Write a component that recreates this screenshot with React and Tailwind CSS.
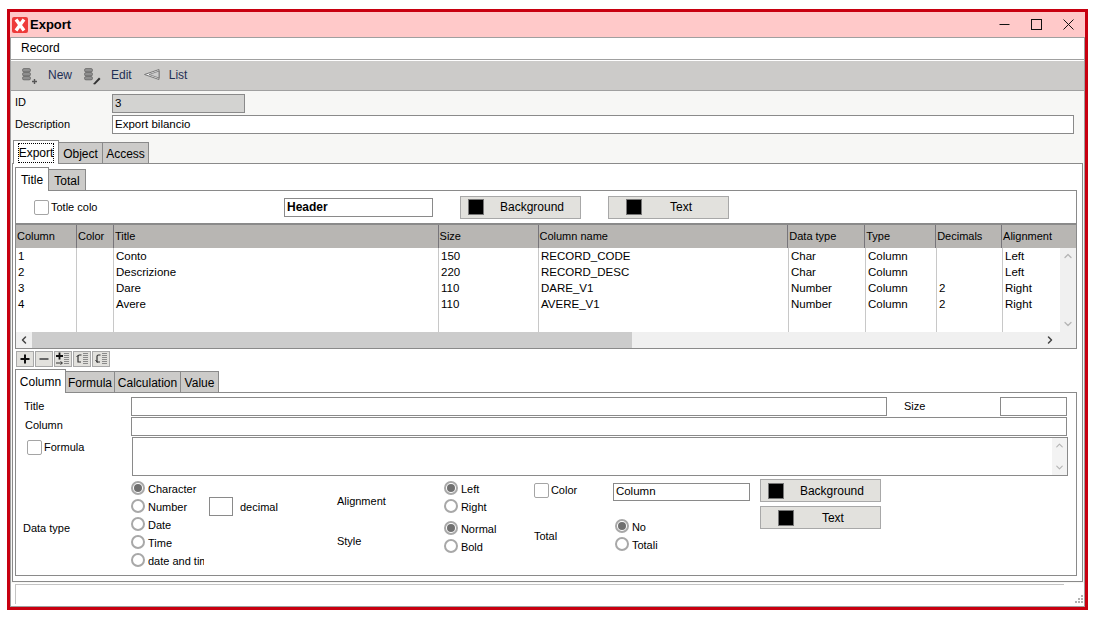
import { ChevronLeft, ChevronRight, ChevronUp, ChevronDown } from "lucide-react";

const columns = [
  { name: "Column", w: "w-[60px]" },
  { name: "Color", w: "w-[37px]" },
  { name: "Title", w: "w-[325px]" },
  { name: "Size", w: "w-[100px]" },
  { name: "Column name", w: "w-[250px]" },
  { name: "Data type", w: "w-[77px]" },
  { name: "Type", w: "w-[71px]" },
  { name: "Decimals", w: "w-[66px]" },
  { name: "Alignment", w: "w-[75px]" },
];

const rows = [
  ["1", "", "Conto", "150", "RECORD_CODE", "Char", "Column", "", "Left"],
  ["2", "", "Descrizione", "220", "RECORD_DESC", "Char", "Column", "", "Left"],
  ["3", "", "Dare", "110", "DARE_V1", "Number", "Column", "2", "Right"],
  ["4", "", "Avere", "110", "AVERE_V1", "Number", "Column", "2", "Right"],
];

function Tab({ label, w, active, focus }) {
  if (active) {
    return (
      <div className={`relative z-10 -mb-px flex h-[24px] ${w} items-center justify-center border border-b-0 border-[#8a8a8a] bg-white pt-px text-[12px]`}>
        <span className={focus ? "outline-1 outline-dotted outline-black" : ""}>{label}</span>
      </div>
    );
  }
  return (
    <div className={`mt-[2px] flex h-[21px] ${w} items-center justify-center border border-b-0 border-l-0 border-[#8a8a8a] bg-[#cccbc9] pt-[2px] text-[12px]`}>
      {label}
    </div>
  );
}

function Check({ label }) {
  return (
    <div className="flex items-center gap-[2px]">
      <span className="h-[15px] w-[15px] shrink-0 rounded-[2px] border border-[#a5a5a5] bg-white" />
      <span className="text-[11px]">{label}</span>
    </div>
  );
}

function Radio({ label, on }) {
  return (
    <div className="flex h-[18px] items-center gap-[3px]">
      <span className="flex h-[14px] w-[14px] shrink-0 items-center justify-center rounded-full border-2 border-[#a8a8a8] bg-white">
        {on && <span className="h-[8px] w-[8px] rounded-full bg-[#707070]" />}
      </span>
      <span className="whitespace-nowrap pt-[2px] text-[11px]">{label}</span>
    </div>
  );
}

function ColorButton({ label, swatchGap, labelPad }) {
  return (
    <div className="flex h-[23px] w-[121px] items-center border border-[#a8a8a8] bg-[#e2e1dd] text-[12px]">
      <span className={`${swatchGap} h-[16px] w-[16px] border border-[#777] bg-black`} />
      <span className={`flex-1 text-center ${labelPad}`}>{label}</span>
    </div>
  );
}

function DbIcon({ children }) {
  return (
    <svg width="20" height="18" viewBox="0 0 20 18">
      <g fill="#8f8f8f" stroke="#555" strokeWidth="0.6">
        <rect x="2.5" y="1.5" width="8" height="3.4" rx="1.5" />
        <rect x="2.5" y="5.5" width="8" height="3.4" rx="1.5" />
        <rect x="2.5" y="9.5" width="8" height="3.4" rx="1.5" />
      </g>
      {children}
    </svg>
  );
}

function MiniBtn({ children }) {
  return (
    <div className="flex h-[16px] w-[18px] items-center justify-center border border-[#a8a8a8] bg-[#e2e1dd]">
      <svg width="16" height="14" viewBox="0 0 16 14">{children}</svg>
    </div>
  );
}

const lines = (
  <path d="M9 1.5h5M9 3.5h5M9 5.5h5M9 7.5h5M9 9.5h5M9 11.5h5" stroke="#8a8a8a" strokeWidth="1" fill="none" />
);

export default function App() {
  return (
    <div
      className="h-[621px] w-[1099px] overflow-hidden bg-white pl-[7px] pt-[9px] text-black"
      style={{ fontFamily: '"Liberation Sans", Arial, sans-serif' }}
    >
      <div className="flex h-[601px] w-[1081px] flex-col border-[3px] border-[#c80010] bg-[#ffc9c9]">
        {/* title bar */}
        <div className="flex h-[25px] shrink-0 items-center pl-[2px]">
          <div className="flex h-[16px] w-[16px] items-center justify-center rounded-[2px] bg-[#ee3a3a]">
            <svg width="14" height="14" viewBox="0 0 14 14">
              <path d="M3 1.5 11 12.5M11 1.5 3 12.5" stroke="white" strokeWidth="3.4" />
            </svg>
          </div>
          <span className="ml-[2px] text-[13px] font-bold">Export</span>
          <div className="ml-auto flex items-center">
            <svg width="11" height="11" viewBox="0 0 11 11" className="mr-[21px]">
              <path d="M0.5 5.5h10" stroke="#111" strokeWidth="1" />
            </svg>
            <svg width="11" height="11" viewBox="0 0 11 11" className="mr-[21px]">
              <rect x="0.5" y="0.5" width="10" height="10" fill="none" stroke="#111" />
            </svg>
            <svg width="11" height="11" viewBox="0 0 11 11" className="mr-[11px]">
              <path d="M0.5 0.5 10.5 10.5M10.5 0.5 0.5 10.5" stroke="#111" />
            </svg>
          </div>
        </div>

        <div className="flex min-h-0 flex-1 flex-col border border-[#a0a0a0] bg-[#f7f7f5]">
          {/* menu */}
          <div className="flex h-[22px] shrink-0 items-center border-b border-[#a0a0a0] bg-white pb-[2px] pl-[10px] text-[12px]">
            Record
          </div>
          {/* toolbar */}
          <div className="flex h-[31px] shrink-0 items-center border-b border-[#a0a0a0] border-t border-t-white bg-[#cccbc9] pl-[9px] text-[12px] text-[#1f2f55]">
            <DbIcon>
              <path d="M12 14.5h5M14.5 12v5" stroke="#555" strokeWidth="1.4" />
            </DbIcon>
            <span className="mb-[2px] ml-[8px]">New</span>
            <span className="ml-[10px]">
              <DbIcon>
                <path d="M11 17 17 10.5 18.5 12 13 17.5Z" fill="#333" />
              </DbIcon>
            </span>
            <span className="mb-[2px] ml-[9px]">Edit</span>
            <svg width="16" height="14" viewBox="0 0 16 14" className="mb-[2px] ml-[12px]">
              <path d="M0.5 6.5 15 1.5v10Z" fill="#f4f4f4" stroke="#777" />
              <path d="M5 6.5 15 3v7Z" fill="#ccc" stroke="#666" strokeWidth="0.7" />
            </svg>
            <span className="mb-[2px] ml-[9px]">List</span>
          </div>

          {/* head fields */}
          <div className="flex items-center pl-[4px] pt-[3px]">
            <span className="mb-[2px] w-[97px] text-[11px]">ID</span>
            <div className="flex h-[19px] w-[133px] items-center border border-[#8a8a8a] bg-[#d3d3d1] px-[2px] text-[11.5px]">3</div>
          </div>
          <div className="flex items-center pl-[4px] pt-[2px]">
            <span className="w-[97px] text-[11px]">Description</span>
            <div className="flex h-[19px] w-[962px] items-center border border-[#8a8a8a] bg-white px-[2px] text-[11.5px]">Export bilancio</div>
          </div>

          {/* main tabs */}
          <div className="ml-px mr-px mt-[6px] flex min-h-0 flex-1 flex-col">
            <div className="flex pl-px">
              <Tab label="Export" w="w-[46px]" active focus />
              <Tab label="Object" w="w-[44px]" />
              <Tab label="Access" w="w-[46px]" />
            </div>
            <div className="flex flex-1 flex-col border border-[#8a8a8a] bg-white px-[2px] pt-[3px]">
              <div className="flex">
                <Tab label="Title" w="w-[34px]" active />
                <Tab label="Total" w="w-[37px]" />
              </div>

              {/* title section + grid */}
              <div className="flex h-[159px] w-[1062px] shrink-0 flex-col border border-[#8a8a8a]">
                <div className="flex h-[34px] shrink-0 items-center border-b-2 border-[#8a8a8a] pl-[18px]">
                  <div className="w-[250px]"><Check label="Totle colo" /></div>
                  <div className="flex h-[19px] w-[149px] items-center border border-[#8a8a8a] px-[2px] text-[12px] font-bold">Header</div>
                  <div className="ml-[27px]"><ColorButton label="Background" swatchGap="ml-[7px]" labelPad="" /></div>
                  <div className="ml-[27px]"><ColorButton label="Text" swatchGap="ml-[17px]" labelPad="pr-[8px]" /></div>
                </div>
                <div className="flex h-[23px] shrink-0 bg-[#b8b6b3] text-[11px]">
                  {columns.map((c, i) => (
                    <div key={c.name} className={`${c.w} flex items-center overflow-hidden pl-px ${i ? "border-l border-[#77757a]" : ""}`}>
                      {c.name}
                    </div>
                  ))}
                </div>
                <div className="flex min-h-0 flex-1">
                  <div className="flex h-[84px] w-[1044px] overflow-hidden bg-white text-[11.5px]">
                    {columns.map((c, i) => (
                      <div key={c.name} className={`${c.w} shrink-0 pl-[2px] pt-px ${i ? "border-l border-[#c8c8c8]" : ""}`}>
                        {rows.map((r, n) => (
                          <div key={n} className="flex h-[16px] items-center whitespace-nowrap">{r[i]}</div>
                        ))}
                      </div>
                    ))}
                  </div>
                  <div className="flex h-[84px] w-[16px] flex-col items-center justify-between bg-[#f0f0f0] py-[2px] text-[#b5b5b5]">
                    <ChevronUp size={12} strokeWidth={2.5} />
                    <ChevronDown size={12} strokeWidth={2.5} />
                  </div>
                </div>
                <div className="-mt-[1px] flex h-[16px] shrink-0 items-center bg-[#f0f0f0]">
                  <div className="flex w-[16px] justify-center text-[#444]"><ChevronLeft size={12} strokeWidth={3} /></div>
                  <div className="h-full w-[600px] bg-[#cccccc]" />
                  <div className="ml-auto mr-[18px] flex w-[16px] justify-center text-[#444]"><ChevronRight size={12} strokeWidth={3} /></div>
                </div>
              </div>

              {/* mini toolbar */}
              <div className="mt-[2px] flex gap-[1px] pl-px">
                <MiniBtn><path d="M3.5 7h9M8 2.5v9" stroke="#111" strokeWidth="2" /></MiniBtn>
                <MiniBtn><path d="M3.5 7h9" stroke="#666" strokeWidth="2" /></MiniBtn>
                <MiniBtn>{lines}<path d="M1 4h7M4.5 0.5v7" stroke="#111" strokeWidth="1.8" /><path d="M1 11h6M5.5 9.5l2 1.5-2 1.5" stroke="#333" fill="none" /></MiniBtn>
                <MiniBtn>{lines}<path d="M7.5 3H5.5Q4 3 4 4.5V10H7" stroke="#333" strokeWidth="1.2" fill="none" /><path d="M2.5 5 4.5 3" stroke="#333" fill="none" /></MiniBtn>
                <MiniBtn>{lines}<path d="M7.5 3H5.5Q4 3 4 4.5V10H7" stroke="#333" strokeWidth="1.2" fill="none" /><path d="M2.5 8 4.5 10.5" stroke="#333" fill="none" /></MiniBtn>
              </div>

              {/* lower tabs */}
              <div className="mt-[2px] flex">
                <Tab label="Column" w="w-[51px]" active />
                <Tab label="Formula" w="w-[49px]" />
                <Tab label="Calculation" w="w-[66px]" />
                <Tab label="Value" w="w-[38px]" />
              </div>
              <div className="flex h-[184px] w-[1062px] shrink-0 flex-col border border-[#8a8a8a] pt-[4px]">
                <div className="flex items-center pl-[8px]">
                  <span className="w-[107px] text-[11px]">Title</span>
                  <div className="h-[19px] w-[756px] border border-[#8a8a8a]" />
                  <span className="ml-[17px] w-[96px] text-[11px]">Size</span>
                  <div className="h-[19px] w-[67px] border border-[#8a8a8a]" />
                </div>
                <div className="mt-px flex items-center pl-[9px]">
                  <span className="mb-[2px] w-[106px] text-[11px]">Column</span>
                  <div className="h-[19px] w-[936px] border border-[#8a8a8a]" />
                </div>
                <div className="mt-px flex pl-[11px]">
                  <div className="w-[105px] pt-[2px]"><Check label="Formula" /></div>
                  <div className="flex h-[39px] w-[936px] justify-end border border-[#8a8a8a]">
                    <div className="flex h-full w-[15px] flex-col items-center justify-between bg-[#f3f3f3] py-[2px] text-[#b5b5b5]">
                      <ChevronUp size={11} strokeWidth={2.5} />
                      <ChevronDown size={11} strokeWidth={2.5} />
                    </div>
                  </div>
                </div>

                {/* options */}
                <div className="mt-[3px] flex">
                  <div className="flex w-[115px] items-center pl-[7px] pt-[9px] text-[11px]">Data type</div>
                  <div className="w-[73px] overflow-hidden">
                    <Radio label="Character" on />
                    <Radio label="Number" />
                    <Radio label="Date" />
                    <Radio label="Time" />
                    <Radio label="date and time" />
                  </div>
                  <div className="ml-[5px] flex h-[36px] items-start pt-[18px]">
                    <div className="h-[19px] w-[24px] shrink-0 border border-[#8a8a8a]" />
                    <span className="ml-[7px] pt-px text-[11px] leading-[19px]">decimal</span>
                  </div>
                  <div className="ml-[59px] flex w-[107px] flex-col pt-[4px] text-[11px]">
                    <div className="flex h-[36px] items-center">Alignment</div>
                    <div className="mt-[4px] flex h-[36px] items-center">Style</div>
                  </div>
                  <div className="w-[90px]">
                    <Radio label="Left" on />
                    <Radio label="Right" />
                    <div className="h-[4px]" />
                    <Radio label="Normal" on />
                    <Radio label="Bold" />
                  </div>
                  <div className="w-[79px]">
                    <div className="pt-[3px]"><Check label="Color" /></div>
                    <div className="mt-[20px] flex h-[36px] items-center text-[11px]">Total</div>
                  </div>
                  <div className="w-[147px] pt-[4px]">
                    <div className="flex h-[18px] w-[137px] items-center border border-[#8a8a8a] px-[2px] text-[11.5px]">Column</div>
                    <div className="mt-[16px] pl-[2px]">
                      <Radio label="No" on />
                      <Radio label="Totali" />
                    </div>
                  </div>
                  <div className="flex flex-col gap-[4px]">
                    <ColorButton label="Background" swatchGap="ml-[7px]" labelPad="" />
                    <ColorButton label="Text" swatchGap="ml-[17px]" labelPad="pr-[8px]" />
                  </div>
                </div>
              </div>
            </div>
          </div>

          {/* status bar */}
          <div className="relative mt-px h-[23px] shrink-0 bg-white pl-[4px] pt-px">
            <div className="h-[20px] w-[1049px] border-l border-t border-[#c4c4c4]" />
            <svg width="12" height="12" viewBox="0 0 12 12" className="absolute bottom-0 right-0">
              <g fill="#b0b0b0">
                <rect x="9" y="1" width="2" height="2" />
                <rect x="6" y="4" width="2" height="2" />
                <rect x="9" y="4" width="2" height="2" />
                <rect x="3" y="7" width="2" height="2" />
                <rect x="6" y="7" width="2" height="2" />
                <rect x="9" y="7" width="2" height="2" />
              </g>
            </svg>
          </div>
        </div>
      </div>
    </div>
  );
}
